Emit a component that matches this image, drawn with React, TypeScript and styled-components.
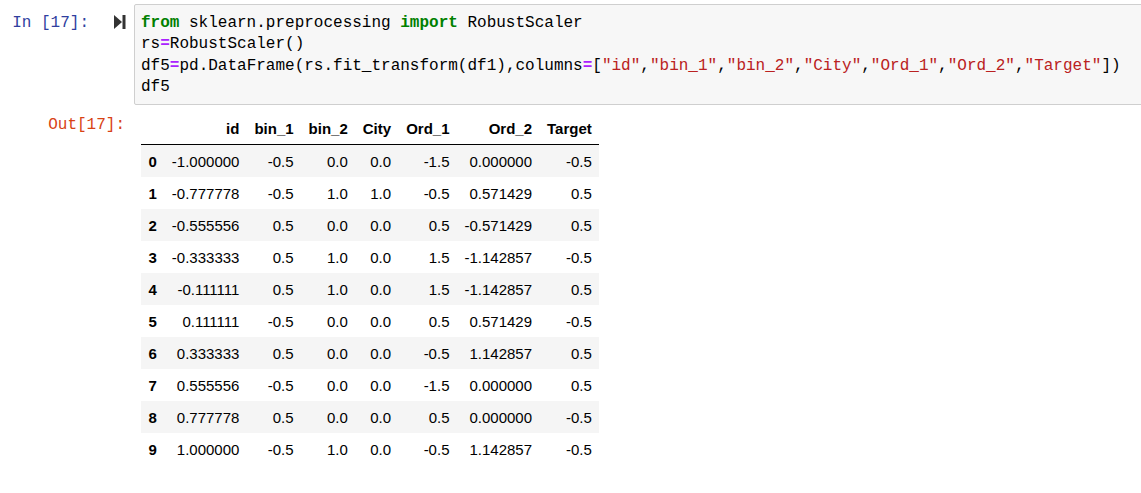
import React from "react";
import styled, { createGlobalStyle } from "styled-components";

const Global = createGlobalStyle`
  html, body { margin: 0; padding: 0; background: #ffffff; overflow: hidden; }
  body { width: 1141px; height: 493px; }
`;

const Notebook = styled.div`
  width: 1170px;
  padding-top: 4px;
`;

const Row = styled.div<{ $gap?: number }>`
  display: flex;
  align-items: flex-start;
  margin-top: ${(p) => p.$gap ?? 0}px;
`;

const InPrompt = styled.div`
  width: 134px;
  box-sizing: border-box;
  flex: none;
  display: flex;
  justify-content: flex-end;
  align-items: flex-start;
  padding-top: 9px;
  padding-right: 8px;
`;

const PromptLabel = styled.span<{ $color: string }>`
  font-family: "Liberation Mono", "DejaVu Sans Mono", monospace;
  font-size: 16px;
  line-height: 21.25px;
  color: ${(p) => p.$color};
  white-space: pre;
`;

const RunIcon = styled.svg`
  margin-left: 25px;
  margin-top: 2px;
  flex: none;
`;

const InputArea = styled.div`
  flex: 1;
  background: #f7f7f7;
  border: 1px solid #cfcfcf;
  border-radius: 2px;
  padding: 8px 7px 6px 6px;
`;

const Code = styled.pre`
  margin: 0;
  font-family: "Liberation Mono", "DejaVu Sans Mono", monospace;
  font-size: 16px;
  line-height: 21.25px;
  color: #000000;
`;

const Kw = styled.span`
  color: #008000;
  font-weight: bold;
`;
const Op = styled.span`
  color: #aa22ff;
  font-weight: bold;
`;
const Str = styled.span`
  color: #ba2121;
`;

const OutPrompt = styled.div`
  width: 134px;
  box-sizing: border-box;
  flex: none;
  text-align: right;
  padding-right: 9px;
  padding-top: 3px;
`;

const OutputArea = styled.div`
  padding-left: 7px;
`;

const Table = styled.table`
  border-collapse: collapse;
  border-spacing: 0;
  font-family: "Liberation Sans", Arial, sans-serif;
  font-size: 15px;
  color: #000000;
`;

const Th = styled.th`
  font-weight: bold;
  text-align: right;
  vertical-align: bottom;
  padding: 7.5px;
  line-height: 17px;
  border: none;
`;

const HeadRow = styled.tr`
  border-bottom: 1px solid #000000;
`;

const BodyRow = styled.tr`
  &:nth-child(odd) {
    background: #f5f5f5;
  }
`;

const Td = styled.td`
  text-align: right;
  vertical-align: middle;
  padding: 7.5px;
  line-height: 17px;
  border: none;
`;

const RowTh = styled(Th)`
  vertical-align: middle;
`;

const columns = ["id", "bin_1", "bin_2", "City", "Ord_1", "Ord_2", "Target"];

const data: string[][] = [
  ["-1.000000", "-0.5", "0.0", "0.0", "-1.5", "0.000000", "-0.5"],
  ["-0.777778", "-0.5", "1.0", "1.0", "-0.5", "0.571429", "0.5"],
  ["-0.555556", "0.5", "0.0", "0.0", "0.5", "-0.571429", "0.5"],
  ["-0.333333", "0.5", "1.0", "0.0", "1.5", "-1.142857", "-0.5"],
  ["-0.111111", "0.5", "1.0", "0.0", "1.5", "-1.142857", "0.5"],
  ["0.111111", "-0.5", "0.0", "0.0", "0.5", "0.571429", "-0.5"],
  ["0.333333", "0.5", "0.0", "0.0", "-0.5", "1.142857", "0.5"],
  ["0.555556", "-0.5", "0.0", "0.0", "-1.5", "0.000000", "0.5"],
  ["0.777778", "0.5", "0.0", "0.0", "0.5", "0.000000", "-0.5"],
  ["1.000000", "-0.5", "1.0", "0.0", "-0.5", "1.142857", "-0.5"],
];

const strs = ["id", "bin_1", "bin_2", "City", "Ord_1", "Ord_2", "Target"];

export default function App() {
  return (
    <>
      <Global />
      <Notebook>
        <Row>
          <InPrompt>
            <PromptLabel $color="#303f9f">In [17]:</PromptLabel>
            <RunIcon width="12" height="14" viewBox="0 0 12 14">
              <polygon points="0,0 8,7 0,14" fill="#333" />
              <rect x="8.5" y="0" width="3" height="14" fill="#333" />
            </RunIcon>
          </InPrompt>
          <InputArea>
            <Code>
              <Kw>from</Kw> sklearn.preprocessing <Kw>import</Kw> RobustScaler
              {"\n"}rs<Op>=</Op>RobustScaler()
              {"\n"}df5<Op>=</Op>pd.DataFrame(rs.fit_transform(df1),columns<Op>=</Op>[
              {strs.map((s, i) => (
                <React.Fragment key={s}>
                  <Str>"{s}"</Str>
                  {i < strs.length - 1 ? "," : ""}
                </React.Fragment>
              ))}
              ])
              {"\n"}df5
            </Code>
          </InputArea>
        </Row>
        <Row $gap={7}>
          <OutPrompt>
            <PromptLabel $color="#d84315">Out[17]:</PromptLabel>
          </OutPrompt>
          <OutputArea>
            <Table>
              <thead>
                <HeadRow>
                  <Th></Th>
                  {columns.map((c) => (
                    <Th key={c}>{c}</Th>
                  ))}
                </HeadRow>
              </thead>
              <tbody>
                {data.map((r, i) => (
                  <BodyRow key={i}>
                    <RowTh>{i}</RowTh>
                    {r.map((v, j) => (
                      <Td key={j}>{v}</Td>
                    ))}
                  </BodyRow>
                ))}
              </tbody>
            </Table>
          </OutputArea>
        </Row>
      </Notebook>
    </>
  );
}
